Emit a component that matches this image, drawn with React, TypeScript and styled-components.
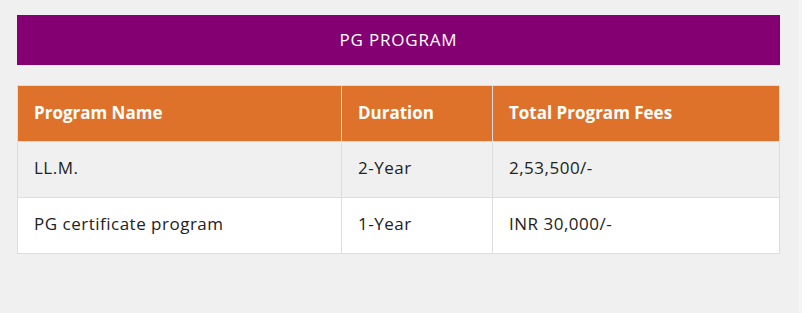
import styled, { createGlobalStyle } from "styled-components";

const GlobalStyle = createGlobalStyle`
  html, body {
    margin: 0;
    padding: 0;
    background: #f5f5f5;
  }
  body {
    font-family: "Open Sans", "Liberation Sans", sans-serif;
  }
`;

const Page = styled.main`
  width: 799px;
  min-height: 313px;
  box-sizing: border-box;
  padding: 15px 0 0 17px;
  background: #f0f0f0;
`;

const Banner = styled.div`
  width: 763px;
  height: 50px;
  padding-bottom: 2px;
  box-sizing: border-box;
  display: flex;
  align-items: center;
  justify-content: center;
  background: #840072;
  color: #ffffff;
  font-size: 17px;
  letter-spacing: 0.8px;
`;

const Table = styled.table`
  width: 763px;
  margin-top: 20px;
  border-collapse: collapse;
  table-layout: fixed;
  font-size: 17px;
`;

const HeadCell = styled.th<{ $w?: number }>`
  width: ${(p) => (p.$w ? `${p.$w}px` : "auto")};
  height: 56px;
  padding: 0 16px 3px;
  box-sizing: border-box;
  text-align: left;
  font-weight: 700;
  color: #ffffff;
  background: #df722b;
  border: 1px solid #dddddd;
  border-bottom: none;
`;

const Row = styled.tr<{ $alt?: boolean }>`
  background: ${(p) => (p.$alt ? "#ffffff" : "#f0f0f0")};
`;

const Cell = styled.td`
  height: 56px;
  padding: 0 16px 5px;
  box-sizing: border-box;
  color: #222222;
  letter-spacing: 0.5px;
  border: 1px solid #dddddd;
`;

const rows = [
  { name: "LL.M.", duration: "2-Year", fees: "2,53,500/-" },
  { name: "PG certificate program", duration: "1-Year", fees: "INR 30,000/-" },
];

export default function App() {
  return (
    <>
      <GlobalStyle />
      <Page>
        <Banner>PG PROGRAM</Banner>
        <Table>
          <thead>
            <tr>
              <HeadCell $w={324}>Program Name</HeadCell>
              <HeadCell $w={151}>Duration</HeadCell>
              <HeadCell>Total Program Fees</HeadCell>
            </tr>
          </thead>
          <tbody>
            {rows.map((r, i) => (
              <Row key={r.name} $alt={i % 2 === 1}>
                <Cell>{r.name}</Cell>
                <Cell>{r.duration}</Cell>
                <Cell>{r.fees}</Cell>
              </Row>
            ))}
          </tbody>
        </Table>
      </Page>
    </>
  );
}
